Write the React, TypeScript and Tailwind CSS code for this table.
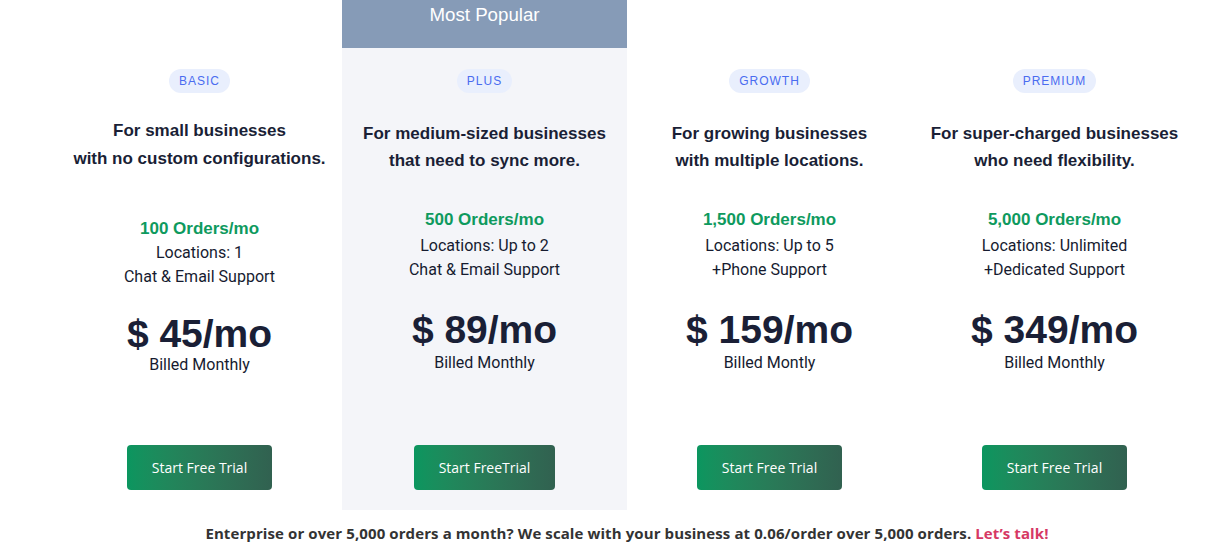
import React from 'react';

type Plan = {
  badge: string;
  lines: string[];
  orders: string;
  details: string[];
  price: string;
  billed: string;
  cta: string;
  popular?: boolean;
  first?: boolean;
};

const plans: Plan[] = [
  {
    badge: 'BASIC',
    lines: ['For small businesses', 'with no custom configurations.'],
    orders: '100 Orders/mo',
    details: ['Locations: 1', 'Chat & Email Support'],
    price: '$ 45/mo',
    billed: 'Billed Monthly',
    cta: 'Start Free Trial',
    first: true,
  },
  {
    badge: 'PLUS',
    lines: ['For medium-sized businesses', 'that need to sync more.'],
    orders: '500 Orders/mo',
    details: ['Locations: Up to 2', 'Chat & Email Support'],
    price: '$ 89/mo',
    billed: 'Billed Monthly',
    cta: 'Start FreeTrial',
    popular: true,
  },
  {
    badge: 'GROWTH',
    lines: ['For growing businesses', 'with multiple locations.'],
    orders: '1,500 Orders/mo',
    details: ['Locations: Up to 5', '+Phone Support'],
    price: '$ 159/mo',
    billed: 'Billed Montly',
    cta: 'Start Free Trial',
  },
  {
    badge: 'PREMIUM',
    lines: ['For super-charged businesses', 'who need flexibility.'],
    orders: '5,000 Orders/mo',
    details: ['Locations: Unlimited', '+Dedicated Support'],
    price: '$ 349/mo',
    billed: 'Billed Monthly',
    cta: 'Start Free Trial',
  },
];

const arial = "font-['Liberation_Sans',Arial,sans-serif]";
const roboto = "font-['Roboto','Liberation_Sans',sans-serif]";

const PlanColumn = ({ plan }: { plan: Plan }) => {
  return (
    <div className={`flex flex-col items-center pb-5 ${plan.popular ? 'bg-[#f4f5f9]' : 'pt-[69px]'}`}>
      {plan.popular && (
        <div className={`w-full h-12 bg-[#869bb7] text-white text-[18.7px] leading-[30px] text-center ${arial} mb-[21px]`}>
          Most Popular
        </div>
      )}

      <span className={`h-6 px-2.5 rounded-full bg-[#e9effd] text-[#4a6cf0] text-xs tracking-[1px] flex items-center ${arial}`}>
        {plan.badge}
      </span>

      <div
        className={`text-center text-[17px] font-bold text-[#1a1f36] ${arial} ${
          plan.first ? 'mt-[24px] leading-[28px]' : 'mt-[27px] leading-[27px]'
        }`}
      >
        {plan.lines.map((l) => (
          <div key={l}>{l}</div>
        ))}
      </div>

      <div
        className={`text-center text-[17px] leading-6 font-bold text-[#0e9a5e] ${arial} ${
          plan.first ? 'mt-[44px]' : 'mt-[34px]'
        }`}
      >
        {plan.orders}
      </div>
      <div className={`text-center text-base leading-6 text-[#161b30] ${roboto} ${plan.first ? '' : 'mt-0.5'}`}>
        {plan.details.map((d) => (
          <div key={d}>{d}</div>
        ))}
      </div>

      <div
        className={`text-[39px] font-bold text-[#1a1f36] ${arial} ${
          plan.first ? 'mt-[26px] leading-[38px]' : 'mt-[28px] leading-[40px]'
        }`}
      >
        {plan.price}
      </div>
      <div className={`text-base leading-6 text-[#161b30] ${roboto} ${plan.first ? '' : 'mt-px'}`}>{plan.billed}</div>

      <button
        className={`mt-auto h-[45px] px-[25px] rounded bg-gradient-to-r from-[#0a965f] to-[#316150] text-white text-[14px] font-['Open_Sans',sans-serif]`}
      >
        {plan.cta}
      </button>
    </div>
  );
};

export default function App() {
  return (
    <div className="w-[1232px] h-[552px] bg-white overflow-hidden">
      <div className="ml-[57px] w-[1140px]">
        <div className="grid grid-cols-4 h-[510px]">
          {plans.map((p) => (
            <PlanColumn key={p.badge} plan={p} />
          ))}
        </div>
        <p className="mt-[12px] text-center text-[15px] tracking-[0.1px] font-bold text-[#333333] font-['Open_Sans',sans-serif]">
          Enterprise or over 5,000 orders a month? We scale with your business at 0.06/order over 5,000 orders.{' '}
          <a className="text-[#d63864]" href="#">
            Let’s talk!
          </a>
        </p>
      </div>
    </div>
  );
}
